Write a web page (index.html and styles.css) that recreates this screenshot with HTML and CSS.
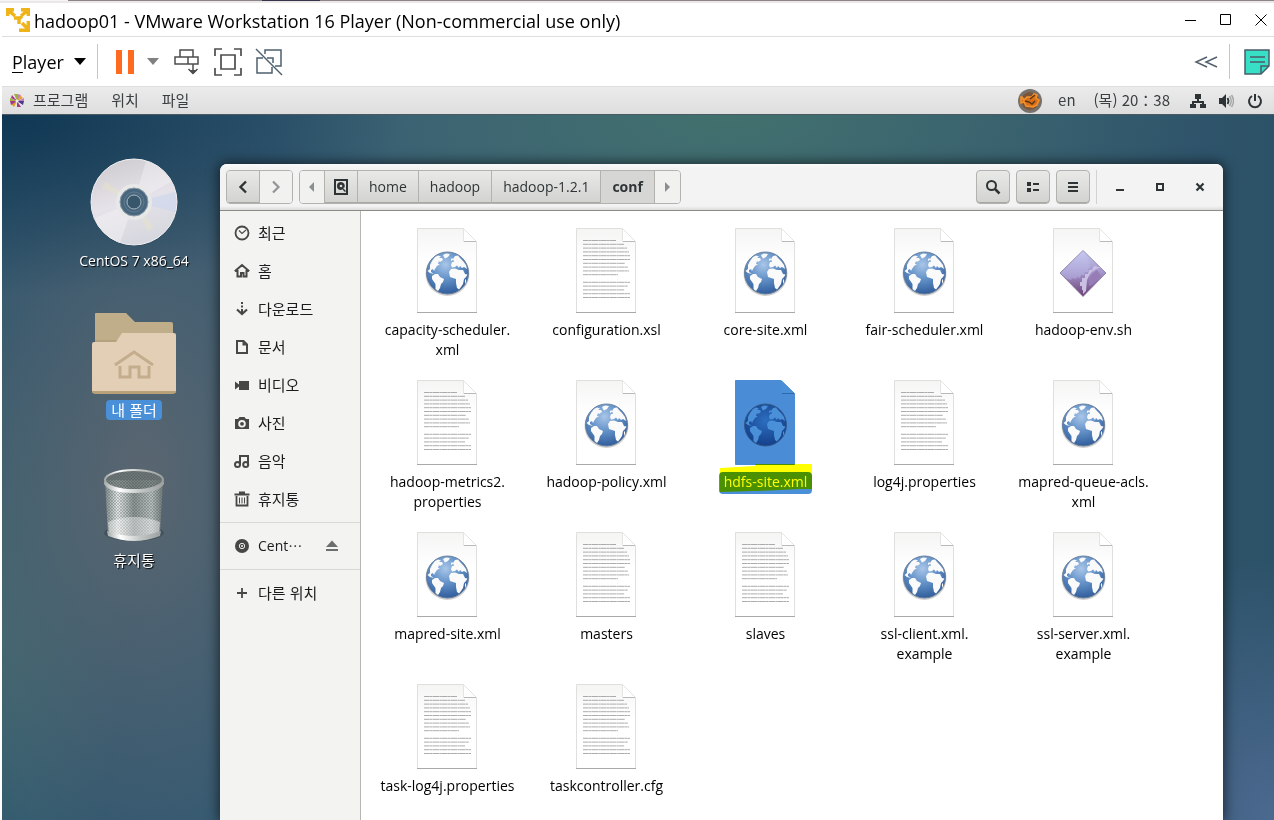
FILE: index.html
```html
<!DOCTYPE html>
<html lang="ko">
<head>
<meta charset="utf-8">
<title>hadoop01 - VMware Workstation 16 Player</title>
<link rel="stylesheet" href="styles.css">
</head>
<body>
<svg class="sprite" aria-hidden="true">
  <defs>
    <linearGradient id="paper" x1="0" y1="0" x2="0" y2="1"><stop offset="0" stop-color="#f5f5f4"/><stop offset=".4" stop-color="#fff"/></linearGradient>
    <radialGradient id="sea" cx=".45" cy=".3" r=".75"><stop offset="0" stop-color="#a9c6e8"/><stop offset=".45" stop-color="#6593c9"/><stop offset="1" stop-color="#2a5796"/></radialGradient>
    <radialGradient id="seaDark" cx=".5" cy=".4" r=".65"><stop offset="0" stop-color="#2d6ec0"/><stop offset="1" stop-color="#123c85"/></radialGradient>
    <linearGradient id="gem" x1="0" y1="0" x2="0" y2="1"><stop offset="0" stop-color="#c6cdf3"/><stop offset=".5" stop-color="#a193c8"/><stop offset="1" stop-color="#6b3f72"/></linearGradient>
    <linearGradient id="metal" x1="0" y1="0" x2="1" y2="0"><stop offset="0" stop-color="#7f8a8a"/><stop offset=".22" stop-color="#e4e8e6"/><stop offset=".5" stop-color="#8b9493"/><stop offset=".8" stop-color="#b9c0be"/><stop offset="1" stop-color="#727c7c"/></linearGradient>
    <linearGradient id="rim" x1="0" y1="0" x2="1" y2="0"><stop offset="0" stop-color="#a5aaa9"/><stop offset=".25" stop-color="#fff"/><stop offset=".6" stop-color="#c4c8c6"/><stop offset="1" stop-color="#9aa09e"/></linearGradient>
    <pattern id="mesh" width="3" height="3" patternUnits="userSpaceOnUse"><path d="M0 0l3 3M3 0L0 3" stroke="#3d4848" stroke-width=".5" opacity=".5"/></pattern>
    <g id="land">
      <path d="M13 41L13 37 15 33 18 29 21 27.500 24 28.500 22 30 25 30 26 32 23 34 22 33 21 36 23 36 20 38 18 41 17 43 16 41 14 42 14 44 17 46 13 45 10.500 43z"/>
      <path d="M26 27L29 25.500 33 26 31 29 28 30.500 27 29z"/>
      <path d="M15 48L18 46 21 46 23 49 27 51 26 54 24 56 23 60 21 63 18.500 61 18.500 56 15 51z"/>
      <path d="M34 37L35 34 37 34 36 31 38 28 41 27.500 43 30 46 33 49 37 50 41 47 39 45 40 43 38 42 40 40 37.500 38 39 35 39.500z"/>
      <path d="M34 31l1.500-1 .5 2-2 1z"/>
      <path d="M32 44L34 41 38 40.500 42 42 46 42 48 46 50.500 46.500 49 49 47 51 46 56 44 59 42 61.500 40 60 39 55 39 51 36 50 33 49z"/>
      <path d="M48 52l1-1 0 3-1 2z"/>
    </g>
    <path id="sheet" d="M.5.5h46l13 13v71H.5z"/>
    <path id="fold" d="M46.500.5v13h13z"/>
  </defs>
  <symbol id="f-web" viewBox="0 0 61 86">
    <use href="#sheet" fill="url(#paper)" stroke="#dfdfdd"/><path d="M0 84.500h60" stroke="#a9a9a7"/>
    <use href="#fold" fill="#fff" stroke="#e4e4e2"/><path d="M47 13.500h12" stroke="#b9b9b7"/>
    <circle cx="30.500" cy="46" r="22" fill="#000" opacity=".18"/><circle cx="30.500" cy="45" r="21" fill="url(#sea)" stroke="#6b809c"/><use href="#land" fill="#fafafa"/>
  </symbol>
  <symbol id="f-sel" viewBox="0 0 61 86">
    <use href="#sheet" fill="#4a8dd6" stroke="#4a8dd6"/><path d="M46 0h15v14z" fill="#fff"/><path d="M46.500.5v13h13z" fill="#4a90d9"/><path d="M47 13.500h12" stroke="#2e68ab"/>
    <circle cx="30.500" cy="45" r="21" fill="url(#seaDark)" stroke="#345b8b"/><use href="#land" fill="#4a90d9"/>
  </symbol>
  <symbol id="f-text" viewBox="0 0 61 86">
    <use href="#sheet" fill="url(#paper)" stroke="#dfdfdd"/><path d="M0 84.500h60" stroke="#a9a9a7"/>
    <use href="#fold" fill="#fff" stroke="#e4e4e2"/><path d="M47 13.500h12" stroke="#b9b9b7"/>
    <path d="M7 12.500h33M7 16.300h41M7 20.100h44M7 23.900h46M7 27.700h47M7 31.500h47M7 35.300h42M7 39.100h45M7 42.900h46M7 46.700h35M7 54.300h47M7 58.100h45M7 61.900h41M7 65.700h47M7 69.500h47" stroke="#989898" stroke-dasharray="5 .3 3 .2 7 .3 2 .2" opacity=".8"/>
  </symbol>
  <symbol id="f-sh" viewBox="0 0 61 86">
    <use href="#sheet" fill="url(#paper)" stroke="#dfdfdd"/><path d="M0 84.500h60" stroke="#a9a9a7"/>
    <use href="#fold" fill="#fff" stroke="#e4e4e2"/><path d="M47 13.500h12" stroke="#b9b9b7"/>
    <path d="M30 22.500L53 45 30 68.500 7 45z" fill="url(#gem)" stroke="#87749f" stroke-width=".8"/>
    <path d="M30 24l2 2 0 2 3 1-1 3 3 2-1 3 2 1-3 3 0 3-3 0-1 3-3 0-1 3-3-1-1 2-4-1-1 2-4-1L7.500 45 30 23z" fill="#c3c4ee" opacity=".4"/>
    <path d="M48 39q-11 3-14 13l-1 11-3 3V62h-1v-4h-2v-4h2v-4h3l0-4 3 0 1-4 3 0 2-4 4 1z" fill="#cbc0e4"/>
    <path d="M39 46l5-4 4 6-9 9-3 1 0-4z" fill="#987cb5"/>
  </symbol>
  <symbol id="i-clock" viewBox="0 0 16 16"><circle cx="8" cy="8" r="6.500" fill="none" stroke="#474744" stroke-width="1.800"/><path d="M5 5.500l3 3 4-3.500" fill="none" stroke="#474744" stroke-width="1.100"/></symbol>
  <symbol id="i-home" viewBox="0 0 16 16"><path d="M.8 8.300L8 2l7.200 6.300M3.500 7v6.500H7V10h2.500v3.500h3V7" fill="none" stroke="#474744" stroke-width="2"/></symbol>
  <symbol id="i-down" viewBox="0 0 16 16"><path d="M8 1v2M8 4.500v2M8 8v4" stroke="#474744" stroke-width="2"/><path d="M3 8.500l5 4.500 5-4.500" fill="none" stroke="#474744" stroke-width="2.200"/></symbol>
  <symbol id="i-doc" viewBox="0 0 16 16"><path d="M3 2h6.500L13 5.500V14H3z" fill="none" stroke="#474744" stroke-width="2"/><path d="M8.500 2v4.500H13z" fill="#474744"/></symbol>
  <symbol id="i-video" viewBox="0 0 16 16"><path d="M5 4h10v9H5zM1 4.500l4 3v2l-4 3z" fill="#474744"/></symbol>
  <symbol id="i-photo" viewBox="0 0 16 16"><path fill-rule="evenodd" d="M1 4h3l1.500-2h5L12 4h3v10H1zM8 5a3.800 3.800 0 100 7.600A3.800 3.800 0 108 5z" fill="#474744"/><circle cx="8" cy="8.800" r="1.900" fill="#474744"/></symbol>
  <symbol id="i-music" viewBox="0 0 16 16"><path d="M6 12V3h8v9" fill="none" stroke="#474744" stroke-width="2"/><circle cx="3.500" cy="11.500" r="2.500" fill="none" stroke="#474744" stroke-width="2"/><circle cx="11.700" cy="11.500" r="2.500" fill="none" stroke="#474744" stroke-width="2"/></symbol>
  <symbol id="i-trash" viewBox="0 0 16 16"><path d="M.5 3.500h15M5 1.500h6M2.500 5v9.500h11V5" fill="none" stroke="#474744" stroke-width="1.800"/><path d="M5.500 6.500v6M8 6.500v6M10.500 6.500v6" stroke="#474744"/></symbol>
  <symbol id="i-disc" viewBox="0 0 16 16"><circle cx="8" cy="8" r="7" fill="#474744"/><circle cx="8" cy="8" r="2.700" fill="none" stroke="#eee"/><circle cx="8" cy="8" r="1" fill="#eee"/></symbol>
  <symbol id="i-plus" viewBox="0 0 16 16"><path d="M8 3v10M3 8h10" stroke="#474744" stroke-width="1.800"/></symbol>
</svg>

<div class="strip"></div>
<header class="titlebar">
  <svg class="vm-logo" viewBox="0 0 26 26" fill="none" stroke="#efb41a" stroke-width="3.400"><path d="M2.700 9V2.700H9M3 3l7 6M16 2.700h7.300V9M23 3l-7 6M9 11h5v6M14 12l3-3M17 16l5 5M23.300 14v9.300H14"/></svg>
  <h1>hadoop01 - VMware Workstation 16 Player (Non-commercial use only)</h1>
  <div class="win-buttons">
    <button aria-label="Minimize"><svg width="12" height="12" viewBox="0 0 12 12"><path d="M0 6.500h11" stroke="#000"/></svg></button>
    <button aria-label="Maximize"><svg width="12" height="12" viewBox="0 0 12 12"><path d="M.5.5h10v10H.5z" fill="none" stroke="#000"/></svg></button>
    <button aria-label="Close"><svg width="12" height="12" viewBox="0 0 12 12"><path d="M.5.5l11 11M11.500.5l-11 11" stroke="#000"/></svg></button>
  </div>
</header>
<nav class="vm-tools">
  <button class="player"><span><u>P</u>layer</span><svg width="12" height="8" viewBox="0 0 12 8"><path d="M0 0h12L6 7z"/></svg></button>
  <span class="rule"></span>
  <button class="pause" aria-label="Suspend"><svg width="20" height="26" viewBox="0 0 20 26"><path d="M1 1h6v24H1zM13 1h6v24h-6z" fill="#fd6a20"/></svg></button>
  <button class="drop" aria-label="Power options"><svg width="12" height="7" viewBox="0 0 12 7"><path d="M0 0h12L6 7z" fill="#808080"/></svg></button>
  <button class="tool" aria-label="Send Ctrl+Alt+Del"><svg width="26" height="28" viewBox="0 0 26 28" fill="none" stroke="#4d4d4d" stroke-width="1.500"><path d="M6 8.500V2h13v6.500M1 9h23v7H1zM14 9v7M19 16v9M14.500 21l4.500 4.500 4.500-4.500"/><path d="M15 22h8l-4 4z" fill="#4d4d4d" stroke="none"/></svg></button>
  <button class="tool" aria-label="Full screen"><svg width="28" height="28" viewBox="0 0 28 28" fill="none" stroke="#4d4d4d" stroke-width="1.700"><path d="M1 8V1h7M20 1h7v7M27 20v7h-7M8 27H1v-7M7 7h14v14H7z"/></svg></button>
  <button class="tool" aria-label="Unity"><svg width="28" height="28" viewBox="0 0 28 28" fill="none" stroke="#4d6070" stroke-width="1.500"><path d="M10 6V2h16v16h-6M8 10H2v15h15v-6M12 10h6v5"/><path d="M1 1l26 26"/></svg></button>
  <span class="grow"></span>
  <button class="collapse" aria-label="Collapse"><svg width="24" height="12" viewBox="0 0 24 12" fill="none" stroke="#54616c" stroke-width="1.500"><path d="M13 1L2 6l11 5M23 1L12 6l11 5"/></svg></button>
  <span class="rule"></span>
  <button class="notes" aria-label="Messages"><svg width="26" height="26" viewBox="0 0 26 26"><path d="M1 1h24v16l-8 8H1z" fill="#37dfc7" stroke="#4c5c68" stroke-width="1.500"/><path d="M17 25v-8h8M6 8h15M6 13h15" fill="none" stroke="#4c5c68" stroke-width="1.500"/></svg></button>
</nav>

<div class="guest">
<nav class="panel">
  <svg width="14" height="14" viewBox="0 0 14 14"><path d="M7 7L4 0h3zM7 7L0 4V7z" fill="#9cb33a"/><path d="M7 7l3-6 3 3z" fill="#e8a430"/><path d="M7 7l7 0-1 4z" fill="#4a3a86"/><path d="M7 7l4 6H7z" fill="#a13b8c"/><path d="M7 7l-3 6-3-3z" fill="#e0a020"/><path d="M7 7L0 7l1 4zM7 7L2 1 1 4z" fill="#a6358e"/><path d="M7 7V0l4 1zM7 7l7-3v3z" fill="#c77fb8"/><circle cx="7" cy="7" r="1.500" fill="#eee"/></svg>
  <button>프로그램</button><button>위치</button><button>파일</button>
  <span class="grow"></span>
  <svg class="engine" width="24" height="24" viewBox="0 0 24 24"><circle cx="12" cy="12" r="12" fill="#77716c"/><circle cx="12" cy="12" r="9" fill="#7d4a25" opacity=".7"/><path d="M3 8v6l3-1 2 4 7 1 4-2 2-5-3-2 1-3-3-1-2 3-5 0-3 3-2-3z" fill="#d8701a" stroke="#f7922a" stroke-width="1.500"/><path d="M7 12l4 1 3 2 3-3M12 10l5-4" fill="none" stroke="#5e3413" stroke-width="1.500"/></svg>
  <button>en</button>
  <button class="time">(목) 20：38</button>
  <svg class="net" width="16" height="16" viewBox="0 0 16 16" fill="#2e3436"><path d="M5 1h6v5H9v2h5v3h2v4h-6v-4h2V10H4v1h2v4H0v-4h2V8h5V6H5z"/></svg>
  <svg class="vol" width="16" height="16" viewBox="0 0 16 16"><path d="M1 5h3l4-4v14l-4-4H1z" fill="#2e3436"/><path d="M9.500 5q2 3 0 6" fill="none" stroke="#2e3436" stroke-width="1.800"/><path d="M11.500 3q3.500 5 0 10M13.500 2q4 6 0 12" fill="none" stroke="#a4a6a6" stroke-width="1.400"/></svg>
  <svg width="16" height="16" viewBox="0 0 16 16" fill="none" stroke="#2e3436" stroke-width="2"><path d="M8 1v7M5 3a6 6 0 106 0"/></svg>
</nav>

<main class="desktop">
  <div class="shortcuts">
    <figure class="sc-disc">
      <svg width="88" height="88" viewBox="0 0 88 88">
        <defs><linearGradient id="cd" x1=".3" y1="0" x2=".6" y2="1"><stop offset="0" stop-color="#cfcdd1"/><stop offset=".5" stop-color="#e6e2e9"/><stop offset="1" stop-color="#d5d7de"/></linearGradient></defs>
        <circle cx="44" cy="45" r="43" fill="#1c2c38" opacity=".5"/><circle cx="44" cy="44" r="43" fill="url(#cd)" stroke="#f2f1f3"/>
        <path d="M44 44L56 3A43 43 0 0181 24zM44 44L30 85A43 43 0 015 60z" fill="#fff" opacity=".3"/><path d="M44 44L85 34a43 43 0 010 20z" fill="#c5d5f2" opacity=".45"/><path d="M44 44L12 30l4-6zM44 44l14 30 6-5z" fill="#efe9b8" opacity=".3"/>
        <circle cx="44" cy="44" r="18" fill="#e8e8e9"/><circle cx="44" cy="44" r="14" fill="#48677e" stroke="#8d9ca7"/><circle cx="44" cy="44" r="10" fill="none" stroke="#6f8697" opacity=".6"/><circle cx="44" cy="44" r="7" fill="#38566b" stroke="#a9b6be"/>
      </svg>
      <figcaption class="latin">CentOS 7 x86_64</figcaption>
    </figure>
    <figure class="sc-home">
      <svg width="84" height="82" viewBox="0 0 84 82">
        <path d="M3 2q0-1 1-1h30l9 9h36q2 0 2 2v40H3z" fill="#c0ae8a"/><path d="M3 28h25l7-7h46v12H3z" fill="#8f7e5c" opacity=".25"/>
        <path d="M0 32q0-2 2-2h22l6-9h52q2 0 2 2v56q0 2-2 2H2q-2 0-2-2z" fill="#e2cfb5"/><path d="M0 79h84v1q-1 2-3 2H3q-2 0-3-2z" fill="#b8a179"/>
        <path d="M23 53l19-13 19 13M28 54v11h10V55h9v10h10V54" fill="none" stroke="#c4ad8d" stroke-width="3"/>
      </svg>
      <figcaption><mark>내 폴더</mark></figcaption>
    </figure>
    <figure class="sc-trash">
      <svg width="62" height="74" viewBox="0 0 62 74">
        <ellipse cx="31" cy="65" rx="30" ry="8" fill="#1f2a32" opacity=".3"/>
        <path d="M2 12l3 54q26 12 52 0l3-54z" fill="url(#metal)"/><path d="M2 12l3 54q26 12 52 0l3-54z" fill="url(#mesh)"/>
        <path d="M5 54q26-10 52 0l-1 11q-25 9-50 0z" fill="#fff" opacity=".4"/>
        <path d="M4 63q27 10 54 0l-1 5q-26 10-52 0z" fill="url(#rim)"/>
        <ellipse cx="31" cy="12" rx="29" ry="10" fill="#737c7b" opacity=".8"/><ellipse cx="31" cy="12" rx="29" ry="10" fill="url(#mesh)" stroke="url(#rim)" stroke-width="2"/><path d="M1 13q6 9 30 9t30-9v3q-5 9-30 9T1 16z" fill="url(#rim)"/>
      </svg>
      <figcaption>휴지통</figcaption>
    </figure>
  </div>

  <section class="window">
    <header class="headerbar">
      <div class="group nav">
        <button class="btn" aria-label="Back"><svg width="16" height="16" viewBox="0 0 16 16"><path d="M11 2.500L5.500 8l5.500 5.500" fill="none" stroke="#2e3436" stroke-width="2.400"/></svg></button>
        <button class="btn off" aria-label="Forward"><svg width="16" height="16" viewBox="0 0 16 16"><path d="M5 2.500L10.500 8 5 13.500" fill="none" stroke="#929595" stroke-width="2.200"/></svg></button>
      </div>
      <div class="group path">
        <button class="btn off end" aria-label="Scroll left"><svg width="6" height="10" viewBox="0 0 6 10"><path d="M5 0v10L0 5z" fill="#8b8e8f"/></svg></button>
        <button class="btn disk" aria-label="File system"><svg width="16" height="16" viewBox="0 0 16 16"><path d="M2 1h12v14H2z" fill="none" stroke="#2e3436" stroke-width="2"/><path d="M8 3a4 4 0 100 8 1 1 0 001-1l3 3 1-1-3-3 1.500-.5A4 4 0 008 3z" fill="#2e3436"/><circle cx="8" cy="7" r="1.300" fill="#ddd"/></svg></button>
        <button class="btn">home</button>
        <button class="btn">hadoop</button>
        <button class="btn">hadoop-1.2.1</button>
        <button class="btn current">conf</button>
        <button class="btn off end" aria-label="Scroll right"><svg width="6" height="10" viewBox="0 0 6 10"><path d="M1 0v10l5-5z" fill="#8b8e8f"/></svg></button>
      </div>
      <span class="grow"></span>
      <button class="btn single" aria-label="Search"><svg width="16" height="16" viewBox="0 0 16 16" fill="none" stroke="#2e3436"><circle cx="6.500" cy="6.500" r="4.500" stroke-width="2"/><path d="M10 10l4.500 4.500" stroke-width="2.500"/></svg></button>
      <button class="btn single" aria-label="List view"><svg width="14" height="12" viewBox="0 0 14 12" fill="#2e3436"><path d="M1 1h4v4H1zM1 7h4v4H1zM7 2h6v2H7zM7 8h6v2H7z"/></svg></button>
      <button class="btn single" aria-label="Menu"><svg width="12" height="12" viewBox="0 0 12 12" fill="#2e3436"><path d="M1 1h10v2H1zM1 5h10v2H1zM1 9h10v2H1z"/></svg></button>
      <span class="hsep"></span>
      <button class="ctl" aria-label="Minimize"><svg width="10" height="10" viewBox="0 0 10 10"><path d="M1 7h8v2H1z" fill="#2e3436"/></svg></button>
      <button class="ctl" aria-label="Maximize"><svg width="10" height="10" viewBox="0 0 10 10"><path d="M2 2h6v6H2z" fill="none" stroke="#2e3436" stroke-width="2"/></svg></button>
      <button class="ctl" aria-label="Close"><svg width="10" height="10" viewBox="0 0 10 10"><path d="M1.500 1.500l7 7M8.500 1.500l-7 7" stroke="#2e3436" stroke-width="2.200"/></svg></button>
    </header>
    <div class="body">
      <aside class="places">
        <a href="#"><svg><use href="#i-clock"/></svg>최근</a>
        <a href="#"><svg><use href="#i-home"/></svg>홈</a>
        <a href="#"><svg><use href="#i-down"/></svg>다운로드</a>
        <a href="#"><svg><use href="#i-doc"/></svg>문서</a>
        <a href="#"><svg><use href="#i-video"/></svg>비디오</a>
        <a href="#"><svg><use href="#i-photo"/></svg>사진</a>
        <a href="#"><svg><use href="#i-music"/></svg>음악</a>
        <a href="#"><svg><use href="#i-trash"/></svg>휴지통</a>
        <hr>
        <div class="mount"><a href="#"><svg><use href="#i-disc"/></svg><span class="latin">Cent⋯</span></a>
          <button aria-label="Eject"><svg viewBox="0 0 16 16"><path d="M8 2.500L14 9H2zM2 11h12v2H2z" fill="#6b6e6e"/></svg></button></div>
        <hr>
        <a href="#"><svg><use href="#i-plus"/></svg>다른 위치</a>
      </aside>
      <div class="files">
        <a class="file" href="#"><svg><use href="#f-web"/></svg><span>capacity-scheduler.<br>xml</span></a>
        <a class="file" href="#"><svg><use href="#f-text"/></svg><span>configuration.xsl</span></a>
        <a class="file" href="#"><svg><use href="#f-web"/></svg><span>core-site.xml</span></a>
        <a class="file" href="#"><svg><use href="#f-web"/></svg><span>fair-scheduler.xml</span></a>
        <a class="file" href="#"><svg><use href="#f-sh"/></svg><span>hadoop-env.sh</span></a>
        <a class="file" href="#"><svg><use href="#f-text"/></svg><span>hadoop-metrics2.<br>properties</span></a>
        <a class="file" href="#"><svg><use href="#f-web"/></svg><span>hadoop-policy.xml</span></a>
        <a class="file selected" href="#"><svg><use href="#f-sel"/></svg><span>hdfs-site.xml</span>
          <svg class="marker" viewBox="0 0 92 29"><path d="M0 4l35-2V0h57v25l-12 0-20 1-25 1-35 1z" fill="#ff0"/></svg></a>
        <a class="file" href="#"><svg><use href="#f-text"/></svg><span>log4j.properties</span></a>
        <a class="file" href="#"><svg><use href="#f-web"/></svg><span>mapred-queue-acls.<br>xml</span></a>
        <a class="file" href="#"><svg><use href="#f-web"/></svg><span>mapred-site.xml</span></a>
        <a class="file" href="#"><svg><use href="#f-text"/></svg><span>masters</span></a>
        <a class="file" href="#"><svg><use href="#f-text"/></svg><span>slaves</span></a>
        <a class="file" href="#"><svg><use href="#f-web"/></svg><span>ssl-client.xml.<br>example</span></a>
        <a class="file" href="#"><svg><use href="#f-web"/></svg><span>ssl-server.xml.<br>example</span></a>
        <a class="file" href="#"><svg><use href="#f-text"/></svg><span>task-log4j.properties</span></a>
        <a class="file" href="#"><svg><use href="#f-text"/></svg><span>taskcontroller.cfg</span></a>
      </div>
    </div>
  </section>
</main>
</div>
</body>
</html>
```
FILE: styles.css
```css
* { box-sizing: border-box; }
body {
  margin: 0;
  height: 100vh;
  display: flex;
  flex-direction: column;
  overflow: hidden;
  background: #fff;
  color: #2e3436;
  font: 15px/20px "Noto Sans CJK KR", sans-serif;
}
button {
  display: flex;
  align-items: center;
  justify-content: center;
  margin: 0;
  padding: 0;
  border: 0;
  background: none;
  color: inherit;
  font: inherit;
}
a { color: inherit; text-decoration: none; }
svg { display: block; flex: none; }
.sprite { position: absolute; width: 0; height: 0; }
.grow { flex: 1; }
.latin { font: 14px/20px "Open Sans", "Noto Sans CJK KR", sans-serif; }

/* Host window */
.strip {
  height: 3px;
  border-bottom: 2px solid #ece8e8;
  background: linear-gradient(90deg, #f4f4f4 68px, #8b8488 68px 262px, #35334a 262px 320px, #8b8488 320px);
}
.titlebar { display: flex; align-items: center; height: 33px; padding-left: 5px; }
.vm-logo { width: 26px; height: 26px; }
.titlebar h1 {
  flex: 1;
  margin: 0 0 0 3px;
  padding-top: 2px;
  color: #000;
  font: 18px/26px "Open Sans", sans-serif;
}
.win-buttons { display: flex; gap: 23px; padding-right: 7px; }
.vm-tools {
  display: flex;
  align-items: center;
  height: 51px;
  margin-left: 2px;
  padding: 0 4px 0 10px;
  border: 1px solid #dedede;
  border-width: 1px 0;
}
.player { gap: 10px; color: #000; font: 18px/26px "Open Sans", sans-serif; }
.player u { text-underline-offset: 3px; }
.rule { width: 1px; height: 35px; background: #c6c6c6; }
.player + .rule { margin: 0 17px 0 11px; }
.drop { margin: 0 14px 0 12px; }
.tool { width: 28px; margin-right: 13px; }
.collapse { margin-right: 11px; }
.notes { margin-left: 14px; }

/* Guest desktop */
.guest { flex: 1; min-height: 0; display: flex; flex-direction: column; margin-left: 2px; }
.panel {
  display: flex;
  align-items: center;
  height: 27px;
  padding: 0 11px 0 8px;
  background: linear-gradient(#ebebeb, #dedede);
  color: #3a3f41;
}
.panel button { margin-left: 23px; padding-bottom: 2px; }
.panel svg + button { margin-left: 9px; }
.panel .engine + button { margin-left: 16px; }
.panel .time { margin-left: 18px; }
.net { margin-left: 20px; }
.vol { margin: 0 13px 0 12px; }
.desktop {
  flex: 1;
  min-height: 0;
  position: relative;
  border-top: 1px solid #4a5a62;
  background:
    radial-gradient(ellipse 400px 180px at 0 0, #103753, transparent),
    radial-gradient(ellipse 480px 200px at 57% 0, #41706d, transparent),
    radial-gradient(ellipse 240px 400px at 11% 52%, #5a6670, transparent),
    radial-gradient(ellipse 120px 320px at 0 75%, #3d6670, transparent),
    radial-gradient(ellipse 200px 260px at 100% 100%, #4c6990, transparent),
    linear-gradient(90deg, #2f566e, #3d5f78 50%, #2c5268);
}
.shortcuts {
  display: flex;
  flex-direction: column;
  align-items: center;
  width: 264px;
  padding-top: 43px;
  color: #fff;
}
.shortcuts figure { margin: 0; display: flex; flex-direction: column; align-items: center; }
.shortcuts figcaption { text-shadow: 1px 1px 1px #000; }
.sc-disc figcaption { margin-top: 5px; }
.sc-home { padding-top: 41px; }
.sc-home figcaption { margin-top: 6px; }
.sc-trash { padding-top: 48px; }
.sc-trash figcaption { margin-top: 8px; }
.shortcuts mark {
  display: block;
  padding: 0 5px;
  border-radius: 4px;
  background: #4a90d9;
  color: #fff;
  text-shadow: none;
}

/* File manager */
.window {
  position: absolute;
  top: 49px;
  right: 51px;
  bottom: 0;
  left: 218px;
  display: flex;
  flex-direction: column;
  overflow: hidden;
  border-radius: 7px 7px 0 0;
  background: #fff;
  box-shadow: 0 0 12px 2px rgba(0, 0, 0, .55);
}
.headerbar {
  display: flex;
  align-items: center;
  gap: 6px;
  height: 47px;
  padding: 0 6px;
  border-bottom: 1px solid #8b8d85;
  background: linear-gradient(#f9f9f9, #f3f3f3 4px, #f3f3f3 42px, #dcdcdc);
  font: 14px/20px "Open Sans", sans-serif;
}
.group { display: flex; border: 1px solid #b2b2ae; border-radius: 4px; overflow: hidden; }
.btn {
  height: 32px;
  padding: 0 11px;
  border-right: 1px solid #b2b2ae;
  background: linear-gradient(#e9e9e8, #d2d2d0);
  box-shadow: inset 0 -1px #a9a9a3;
}
.group .btn:last-child { border-right: 0; }
.nav .btn { width: 33px; padding: 0; }
.nav .btn:last-child { width: 32px; }
.path .end { width: 25px; padding: 0; }
.path .disk { width: 33px; padding: 0; }
.btn.off { background: #f1f1f0; box-shadow: none; }
.btn.current { background: #d6d6d5; box-shadow: none; font-weight: bold; }
.btn.single { width: 34px; height: 34px; padding: 0; border: 1px solid #b2b2ae; border-radius: 4px; }
.hsep { width: 1px; height: 34px; background: #d2d2d0; }
.ctl { width: 34px; height: 34px; }
.body { flex: 1; min-height: 0; display: flex; }
.places {
  width: 141px;
  padding-top: 3px;
  border-right: 1px solid #b6b6b3;
  background: #f3f3f2;
  color: #1c1c1c;
}
.places a { display: flex; align-items: center; gap: 8px; height: 38px; padding-left: 14px; }
.places svg { width: 16px; height: 16px; }
.places hr { height: 1px; margin: 4px 0; border: 0; background: #d8d8d6; }
.mount { display: flex; align-items: center; justify-content: space-between; padding-right: 20px; }
.files {
  flex: 1;
  display: grid;
  grid-template-columns: repeat(auto-fill, 159px);
  grid-auto-rows: 152px;
  align-content: start;
  padding: 17px 0 0 7px;
  color: #000;
  font: 14px/20px "Open Sans", sans-serif;
}
.file { position: relative; display: flex; flex-direction: column; align-items: center; gap: 6px; text-align: center; }
.file svg { width: 61px; height: 86px; }
.selected span { padding: 0 5px 2px; border-radius: 4px; background: #4a90d9; color: #fff; }
.file .marker { position: absolute; top: 84px; left: 34px; width: 92px; height: 29px; mix-blend-mode: multiply; }
```
